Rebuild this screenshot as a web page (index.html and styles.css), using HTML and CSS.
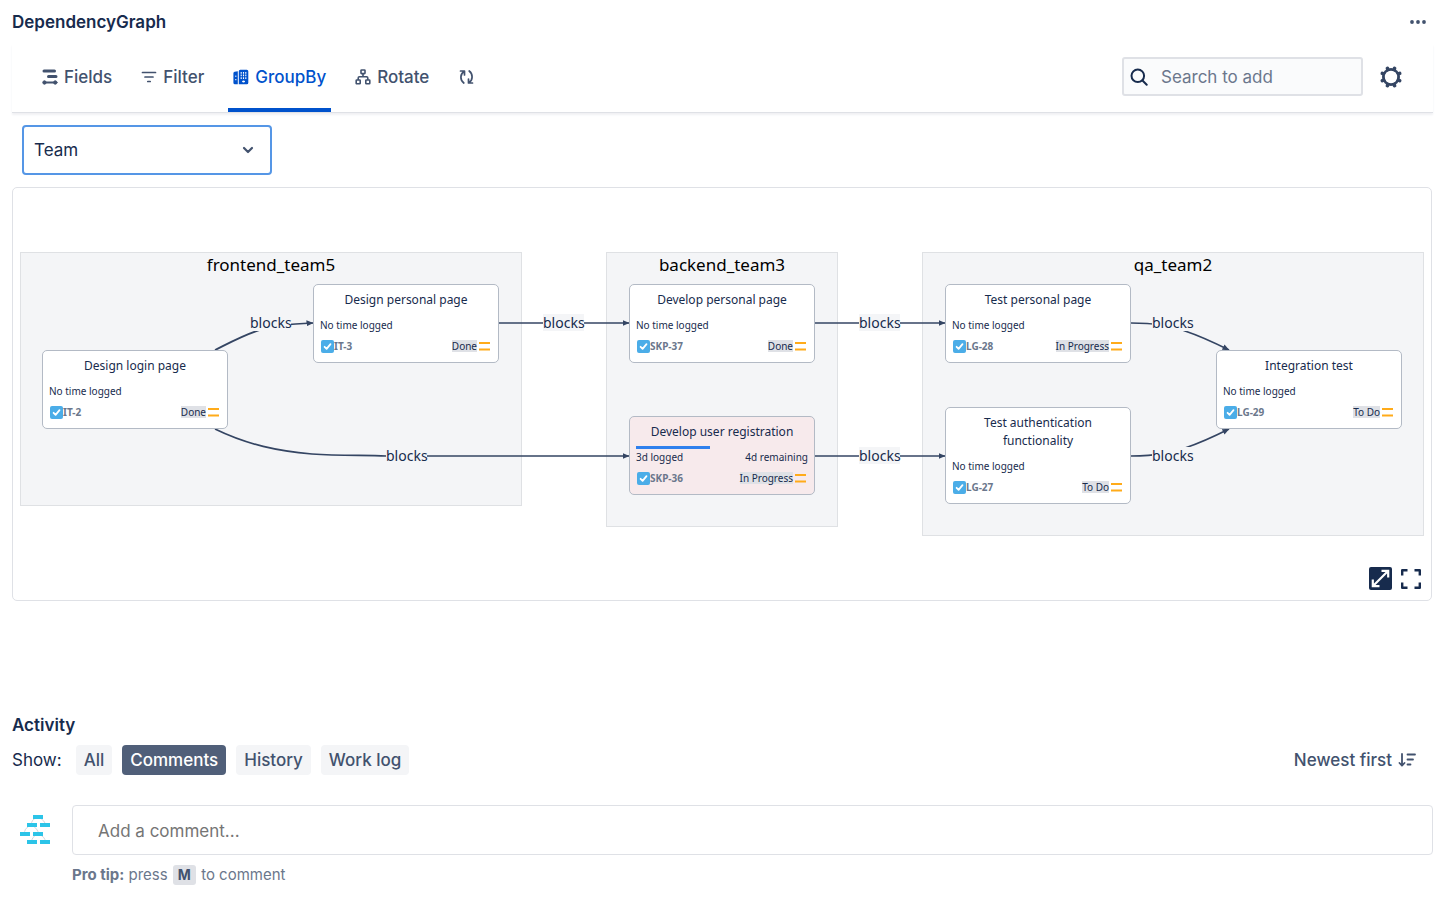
FILE: index.html
```html
<!DOCTYPE html>
<html lang="en">
<head>
<meta charset="utf-8">
<meta name="viewport" content="width=device-width, initial-scale=1">
<title>DependencyGraph</title>
<link rel="stylesheet" href="styles.css">
</head>
<body>
<svg class="sprite" aria-hidden="true">
  <symbol id="task" viewBox="0 0 13 13"><rect width="13" height="13" rx="2" fill="#4bade8"/><path d="M3.6 6.8l2 2 3.9-4.6" fill="none" stroke="#fff" stroke-width="1.8" stroke-linecap="round" stroke-linejoin="round"/></symbol>
  <symbol id="medium" viewBox="0 0 12 10"><path d="M0 2h11M0 8.500h11" stroke="#ffab1a" stroke-width="1.8"/></symbol>
</svg>

<header class="titlebar">
  <h1 class="title">DependencyGraph</h1>
  <button class="icon-btn" type="button" aria-label="More actions">
    <svg width="16" height="6" viewBox="0 0 16 6" fill="#42526e"><circle cx="2" cy="3" r="1.9"/><circle cx="8" cy="3" r="1.9"/><circle cx="14" cy="3" r="1.9"/></svg>
  </button>
</header>

<div class="toolbar">
  <nav class="tabs">
    <button class="tab" type="button">
      <svg width="16" height="16" viewBox="0 0 16 16" fill="none" stroke="currentColor" stroke-linecap="round"><path d="M2 2h10.500M6.500 7.500H14" stroke-width="3"/><path d="M3 13.500h10" stroke-width="1.800"/><circle cx="2.500" cy="13.500" r="1.700" fill="currentColor" stroke-width="1"/><circle cx="13.300" cy="13.500" r="1.700" fill="currentColor" stroke-width="1"/></svg>
      Fields
    </button>
    <button class="tab" type="button">
      <svg width="16" height="16" viewBox="0 0 16 16" fill="none" stroke="currentColor" stroke-width="1.700" stroke-linecap="round"><path d="M1.500 3.500h13M4 8h8M6.800 12.500h2.400"/></svg>
      Filter
    </button>
    <button class="tab tab-active" type="button" aria-current="page">
      <svg width="16" height="16" viewBox="0 0 16 16"><path d="M4.800 2.200v13.100H2A1.600 1.600 0 0 1 .4 13.700V4.300A1.600 1.600 0 0 1 1.600 2.800zM7.300.7h6.500A1.500 1.500 0 0 1 15.300 2.200v11.600a1.500 1.500 0 0 1-1.500 1.500H5.800V2.200A1.500 1.500 0 0 1 7.300.7z" fill="currentColor"/><path d="M8.200 3v7M12.800 3v7M10.500 3v7" stroke="#fff" stroke-width="1.100" stroke-dasharray="1.700 .9"/><path d="M9.700 13v-1h1.700v1zM2 7.200h1.500M2 10.700h1.500" fill="#fff" stroke="#fff" stroke-width=".9"/></svg>
      GroupBy
    </button>
    <button class="tab" type="button">
      <svg width="16" height="16" viewBox="0 0 16 16" fill="none" stroke="currentColor" stroke-width="1.600"><rect x="6" y="1" width="4" height="3.600" rx=".6"/><rect x="1.200" y="11" width="4" height="3.800" rx=".6"/><rect x="10.800" y="11" width="4" height="3.800" rx=".6"/><path d="M8 4.600v3.200M3.200 11V9q0-1.200 1.200-1.200h7.200q1.200 0 1.200 1.200v2"/></svg>
      Rotate
    </button>
    <button class="tab" type="button" aria-label="Refresh">
      <svg width="17" height="16" viewBox="-1 0 17 16" fill="none" stroke="currentColor" stroke-width="1.700" stroke-linecap="round" stroke-linejoin="round"><path d="M1.500 2h4v4M5 2.500C1 5 .8 11 4.800 14M13.500 14h-4v-4M10 13.500c4-2.500 4.200-8.500.2-11.500"/></svg>
    </button>
  </nav>
  <div class="tools">
    <label class="search">
      <svg width="18" height="18" viewBox="0 0 18 18" fill="none" stroke="#172b4d" stroke-width="2" stroke-linecap="round"><circle cx="7.800" cy="7.800" r="6.300"/><path d="M12.500 12.500l4.200 4.200"/></svg>
      <input class="search-input" type="text" placeholder="Search to add" aria-label="Search to add">
    </label>
    <button class="icon-btn" type="button" aria-label="Settings">
      <svg width="24" height="24" viewBox="0 0 24 24" fill="none" stroke="#344563"><circle cx="12" cy="12" r="7.500" stroke-width="3"/><path d="M15.600 3.300L14.800 5.200M20.700 8.400L18.800 9.200M20.700 15.600L18.800 14.800M15.600 20.700L14.800 18.800M8.400 20.700L9.200 18.800M3.300 15.600L5.200 14.800M3.300 8.400L5.200 9.200M8.400 3.300L9.200 5.200" stroke-width="3.600" stroke-linecap="round"/><circle cx="12" cy="12" r="6.200" fill="#fff" stroke="none"/></svg>
    </button>
  </div>
</div>

<div class="group-select">
  <select class="select" aria-label="Group by">
    <option>Team</option>
  </select>
  <svg class="chevron" width="12" height="8" viewBox="0 0 12 8" fill="none" stroke="#42526e" stroke-width="2.200" stroke-linecap="round" stroke-linejoin="round"><path d="M2 2l4 4 4-4"/></svg>
</div>

<main class="panel">
  <div class="canvas">
    <section class="group group-frontend"><h2 class="group-name">frontend_team5</h2></section>
    <section class="group group-backend"><h2 class="group-name">backend_team3</h2></section>
    <section class="group group-qa"><h2 class="group-name">qa_team2</h2></section>

    <svg class="edges" viewBox="0 0 1405 284" aria-hidden="true">
      <defs><marker id="arrow" viewBox="0 0 7 6" refX="6.500" refY="3" markerWidth="7" markerHeight="6" markerUnits="userSpaceOnUse" orient="auto"><path d="M0 0l7 3-7 3z" fill="#344563"/></marker></defs>
      <g fill="none" stroke="#344563" stroke-width="1.700">
        <path d="M195 98C213 89 226 82 240 78C255 73 270 72 293 71" marker-end="url(#arrow)"/>
        <path d="M195 177C228 193 258 199 292 202C320 204 345 203 366 204H609" marker-end="url(#arrow)"/>
        <path d="M479 71H609" marker-end="url(#arrow)"/>
        <path d="M795 71H925" marker-end="url(#arrow)"/>
        <path d="M795 204H925" marker-end="url(#arrow)"/>
        <path d="M1111 71C1140 71 1155 75 1165 79C1180 84 1193 90 1209 98" marker-end="url(#arrow)"/>
        <path d="M1111 204C1140 204 1155 199 1165 196C1180 191 1193 185 1209 177" marker-end="url(#arrow)"/>
      </g>
    </svg>

    <span class="edge-label label-1">blocks</span>
    <span class="edge-label label-2">blocks</span>
    <span class="edge-label label-3">blocks</span>
    <span class="edge-label label-4">blocks</span>
    <span class="edge-label label-5">blocks</span>
    <span class="edge-label label-6">blocks</span>
    <span class="edge-label label-7">blocks</span>

    <article class="node node-it2">
      <h3 class="node-title">Design login page</h3>
      <div class="node-time"><span>No time logged</span></div>
      <div class="node-meta"><svg class="type"><use href="#task"/></svg><span class="key">IT-2</span><span class="status">Done</span><svg class="priority"><use href="#medium"/></svg></div>
    </article>
    <article class="node node-it3">
      <h3 class="node-title">Design personal page</h3>
      <div class="node-time"><span>No time logged</span></div>
      <div class="node-meta"><svg class="type"><use href="#task"/></svg><span class="key">IT-3</span><span class="status">Done</span><svg class="priority"><use href="#medium"/></svg></div>
    </article>
    <article class="node node-skp37">
      <h3 class="node-title">Develop personal page</h3>
      <div class="node-time"><span>No time logged</span></div>
      <div class="node-meta"><svg class="type"><use href="#task"/></svg><span class="key">SKP-37</span><span class="status">Done</span><svg class="priority"><use href="#medium"/></svg></div>
    </article>
    <article class="node node-skp36 node-late">
      <h3 class="node-title">Develop user registration</h3>
      <div class="node-time node-progress"><span>3d logged</span><span>4d remaining</span></div>
      <div class="node-meta"><svg class="type"><use href="#task"/></svg><span class="key">SKP-36</span><span class="status">In Progress</span><svg class="priority"><use href="#medium"/></svg></div>
    </article>
    <article class="node node-lg28">
      <h3 class="node-title">Test personal page</h3>
      <div class="node-time"><span>No time logged</span></div>
      <div class="node-meta"><svg class="type"><use href="#task"/></svg><span class="key">LG-28</span><span class="status">In Progress</span><svg class="priority"><use href="#medium"/></svg></div>
    </article>
    <article class="node node-lg27">
      <h3 class="node-title">Test authentication functionality</h3>
      <div class="node-time"><span>No time logged</span></div>
      <div class="node-meta"><svg class="type"><use href="#task"/></svg><span class="key">LG-27</span><span class="status">To Do</span><svg class="priority"><use href="#medium"/></svg></div>
    </article>
    <article class="node node-lg29">
      <h3 class="node-title">Integration test</h3>
      <div class="node-time"><span>No time logged</span></div>
      <div class="node-meta"><svg class="type"><use href="#task"/></svg><span class="key">LG-29</span><span class="status">To Do</span><svg class="priority"><use href="#medium"/></svg></div>
    </article>
  </div>
  <div class="view-controls">
    <button class="icon-btn" type="button" aria-label="Fit to view">
      <svg width="23" height="23" viewBox="0 0 23 23"><rect width="23" height="23" rx="2" fill="#172b4d"/><path d="M4 19L19 4M12.500 3.800H19.200V10.500M3.800 12.500V19.200H10.500" fill="none" stroke="#fff" stroke-width="2.200"/></svg>
    </button>
    <button class="icon-btn" type="button" aria-label="Full screen">
      <svg width="20" height="20" viewBox="0 0 20 20" fill="none" stroke="#172b4d" stroke-width="2.400" stroke-linejoin="round"><path d="M1.200 6.500V1.200H6.500M13.500 1.200h5.300v5.300M18.800 13.500v5.300h-5.300M6.500 18.800H1.200v-5.300"/></svg>
    </button>
  </div>
</main>

<section class="activity">
  <h2 class="title">Activity</h2>
  <div class="filters">
    <span class="show">Show:</span>
    <button class="chip" type="button">All</button>
    <button class="chip chip-active" type="button" aria-pressed="true">Comments</button>
    <button class="chip" type="button">History</button>
    <button class="chip" type="button">Work log</button>
    <button class="sort" type="button">Newest first
      <svg width="18" height="16" viewBox="0 0 18 16" fill="none" stroke="currentColor" stroke-width="1.800" stroke-linecap="round" stroke-linejoin="round"><path d="M4 2v11.500M1.500 11L4 13.700 6.500 11M9.500 2.500h7.500M9.500 7.500h5.500M9.500 12.500h3"/></svg>
    </button>
  </div>
  <div class="composer">
    <svg class="avatar" width="30" height="30" viewBox="0 0 30 30"><path d="M18 2Q10 5 12 10M18 2Q26 6 25 10M11 10Q3 14 5 19M11 10Q19 14 18 19M18 19Q11 22 12 27M18 19Q26 22 25 27" fill="none" stroke="#c5ccd3" stroke-width=".8"/><g fill="#2cc4e8"><rect x="13" y="0" width="10" height="4"/><rect x="7" y="8" width="10" height="4"/><rect x="20" y="8" width="10" height="4"/><rect x="0" y="17" width="10" height="4"/><rect x="13" y="17" width="10" height="4"/><rect x="7" y="25" width="10" height="4"/><rect x="20" y="25" width="10" height="4"/></g></svg>
    <input class="comment" type="text" placeholder="Add a comment..." aria-label="Add a comment">
    <p class="tip"><strong>Pro tip:</strong> press <kbd class="kbd">M</kbd> to comment</p>
  </div>
</section>
</body>
</html>
```
FILE: styles.css
```css
* { box-sizing: border-box; }
body {
  margin: 0;
  padding: 0 16px 0 12px;
  background: #fff;
  color: #172b4d;
  font: 17px/24px Inter, "Liberation Sans", sans-serif;
}
h1, h2, h3, p { margin: 0; }
button, input, select { font: inherit; color: inherit; }
button { border: 0; padding: 0; background: none; cursor: pointer; }
svg { display: block; flex: none; }
.sprite { position: absolute; width: 0; height: 0; }

.titlebar { display: flex; align-items: center; justify-content: space-between; height: 44px; padding-right: 7px; }
.title { font-size: 17px; font-weight: 600; line-height: 24px; }

.toolbar {
  display: flex;
  justify-content: space-between;
  height: 69px;
  padding: 0 30px 0 25px;
  border-bottom: 1px solid #dfe1e6;
  box-shadow: 0 2px 2px #f0f1f4;
}
.tabs { display: flex; gap: 19px; }
.tab {
  display: flex;
  align-items: center;
  gap: 6px;
  padding: 0 5px;
  border-top: 2px solid transparent;
  border-bottom: 4px solid transparent;
  color: #42526e;
  font-weight: 500;
}
.tab-active { color: #0052cc; border-bottom-color: #0052cc; }
.tools { display: flex; align-items: center; gap: 16px; padding-bottom: 3px; }
.search {
  display: flex;
  align-items: center;
  gap: 13px;
  width: 241px;
  height: 39px;
  padding: 0 6px;
  border: 2px solid #dfe1e6;
  border-radius: 3px;
  background: #fafbfc;
}
.search-input { flex: 1; min-width: 0; border: 0; padding: 0; background: none; outline: 0; }
.search-input::placeholder { color: #6b778c; opacity: 1; }

.group-select { display: grid; align-items: center; width: 250px; margin: 12px 10px; }
.select {
  grid-area: 1 / 1;
  height: 50px;
  padding: 0 10px;
  border: 2px solid #5596e6;
  border-radius: 4px;
  background: #fff;
  appearance: none;
}
.chevron { grid-area: 1 / 1; justify-self: end; margin-right: 18px; pointer-events: none; }

.panel {
  position: relative;
  padding: 64px 6px 64px 7px;
  border: 1px solid #dfe1e6;
  border-radius: 5px;
  margin-right: 1px;
}
.view-controls { position: absolute; right: 10px; bottom: 10px; display: flex; align-items: center; gap: 9px; }

.canvas {
  position: relative;
  width: 1405px;
  height: 284px;
  margin: 0 auto;
  font-family: "Noto Sans", "Open Sans", sans-serif;
}
.edges { position: absolute; inset: 0; width: 100%; height: 100%; }
.group { position: absolute; top: 0; border: 1px solid #dfe1e4; background: #f4f5f7; }
.group-frontend { left: 0; width: 502px; height: 254px; }
.group-backend { left: 586px; width: 232px; height: 275px; }
.group-qa { left: 902px; width: 502px; height: 284px; }
.group-name { color: #000; font-size: 17px; font-weight: 400; line-height: 24px; text-align: center; }

.edge-label {
  position: absolute;
  width: 41px;
  background: #f4f5f7;
  font-size: 14px;
  line-height: 17px;
  text-align: center;
}
.label-1 { left: 230px; top: 62px; }
.label-2 { left: 366px; top: 195px; }
.label-3 { left: 523px; top: 62px; }
.label-4 { left: 839px; top: 62px; }
.label-5 { left: 839px; top: 195px; }
.label-6 { left: 1132px; top: 62px; }
.label-7 { left: 1132px; top: 195px; }

.node {
  position: absolute;
  width: 186px;
  padding: 6px;
  border: 1px solid #b3bac5;
  border-radius: 5px;
  background: #fff;
}
.node-late { background: #f7eaec; }
.node-it2 { left: 22px; top: 98px; }
.node-it3 { left: 293px; top: 32px; }
.node-skp37 { left: 609px; top: 32px; }
.node-skp36 { left: 609px; top: 164px; }
.node-lg28 { left: 925px; top: 32px; }
.node-lg27 { left: 925px; top: 155px; }
.node-lg29 { left: 1196px; top: 98px; }
.node-title { padding: 0 20px; font-size: 12px; font-weight: 400; line-height: 18px; text-align: center; }
.node-skp36 .node-title { padding: 0; }
.node-time {
  display: flex;
  justify-content: space-between;
  margin-top: 5px;
  border-top: 3px solid transparent;
  font-size: 10px;
  line-height: 16px;
}
.node-progress { border-image: linear-gradient(to right, #2f80ed 43%, transparent 43%) 3; }
.node-meta { display: flex; align-items: center; height: 16px; margin: 5px 1px 2px; font-size: 10px; line-height: 12px; }
.type { width: 13px; height: 13px; }
.key { margin-right: auto; color: #6b778c; font-weight: 700; }
.status { background: #dfe1e6; }
.priority { width: 12px; height: 10px; margin-left: 2px; }

.activity { padding-top: 112px; }
.filters { display: flex; align-items: center; gap: 10px; margin-top: 8px; }
.show { margin-right: 4px; }
.chip { height: 30px; padding: 0 8px; border-radius: 4px; background: #f4f5f7; color: #42526e; font-weight: 500; }
.chip-active { background: #505f79; color: #fff; }
.sort { display: flex; align-items: center; gap: 6px; margin-left: auto; padding-right: 17px; color: #42526e; font-weight: 500; }
.composer { display: grid; grid-template-columns: 30px 1fr; column-gap: 22px; align-items: center; margin-top: 30px; padding-left: 8px; }
.comment { width: 100%; height: 50px; padding: 1px 25px 0; border: 1px solid #dfe1e6; border-radius: 4px; }
.comment::placeholder { color: #757575; opacity: 1; }
.tip { grid-column: 2; margin-top: 8px; color: #6b778c; font-size: 15px; }
.kbd { display: inline-block; margin: 0 1px; padding: 0 5px; border-radius: 3px; background: #dfe1e6; color: #42526e; font: 700 14px/20px Inter, "Liberation Sans", sans-serif; }
```
